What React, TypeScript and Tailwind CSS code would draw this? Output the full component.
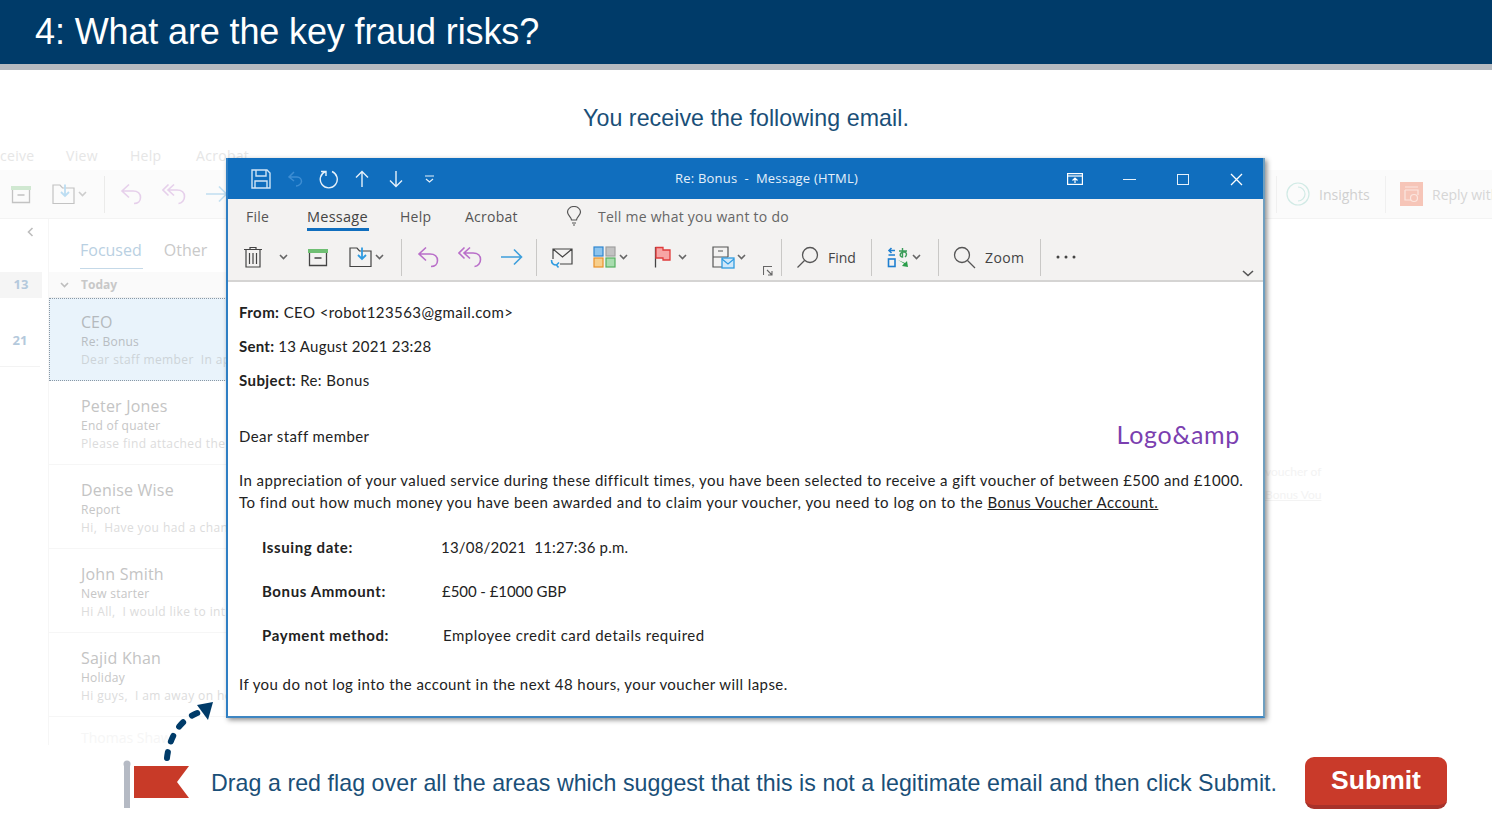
import React from "react";

const Chev = ({ className = "" }: { className?: string }) => (
  <svg width="9" height="6" viewBox="0 0 9 6" className={className} fill="none" stroke="#666" strokeWidth="1.6"><path d="M1 1l3.500 3.500L8 1" /></svg>
);
const Sep = ({ className = "" }: { className?: string }) => <div className={`w-px h-[37px] bg-[#c9c8c6] ${className}`} />;

const Trash = ({ className = "" }: { className?: string }) => (
  <svg width="20" height="22" viewBox="0 0 20 22" className={className} fill="none" stroke="#444" strokeWidth="1.2">
    <path d="M1 3.500h18M7 3.500V1.500h6v2M3 3.500V21h14V3.500M6.500 7v11M10 7v11M13.500 7v11" />
  </svg>
);
const Archive = ({ className = "" }: { className?: string }) => (
  <svg width="22" height="20" viewBox="0 0 22 20" className={className} fill="none">
    <rect x="1" y="2" width="20" height="4" fill="#6fbf73" />
    <path d="M2.500 6v12.500h17V6M7.500 11h7" stroke="#444" strokeWidth="1.300" />
  </svg>
);
const Move = ({ className = "" }: { className?: string }) => (
  <svg width="23" height="22" viewBox="0 0 23 22" className={className} fill="none">
    <path d="M1 20.500V2h7l2.500 3h11.500v15.500z" stroke="#444" strokeWidth="1.200" />
    <path d="M13 1.500v11M9 9l4 4 4-4" stroke="#2f9be0" strokeWidth="1.800" />
  </svg>
);
const Reply = ({ className = "" }: { className?: string }) => (
  <svg width="22" height="22" viewBox="0 0 22 22" className={className} fill="none" stroke="#b96fc9" strokeWidth="1.600">
    <path d="M9 1.500L2 8l7 6.500M2 8h11c5 0 7.500 3 7.500 6.500S18 20.500 14 20.500" />
  </svg>
);
const ReplyAll = ({ className = "" }: { className?: string }) => (
  <svg width="24" height="22" viewBox="0 0 24 22" className={className} fill="none" stroke="#b96fc9" strokeWidth="1.600">
    <path d="M6.500 1.500L1 7l5.500 5.500M12 1.500L6 7l6 5.500M6 7h9c5 0 7.500 3 7.500 6.500S20 20.500 16.500 20.500" />
  </svg>
);
const Forward = ({ className = "" }: { className?: string }) => (
  <svg width="23" height="18" viewBox="0 0 23 18" className={className} fill="none" stroke="#3e9fdc" strokeWidth="1.600">
    <path d="M1 9h20.500M14 1.500L21.500 9 14 16.500" />
  </svg>
);
const MailSync = () => (
  <svg width="24" height="23" viewBox="0 0 24 23" className="ml-[13px]" fill="none">
    <path d="M3 13V3h19v15H10M3 3l9.500 8L22 3" stroke="#444" strokeWidth="1.200" />
    <path d="M1.500 14c0 3 2 5 5 5M9 16.500l-2.500 2.500 2 2.500" stroke="#2f9be0" strokeWidth="1.600" />
  </svg>
);
const Grid = () => (
  <svg width="23" height="22" viewBox="0 0 23 22" className="ml-[19px]">
    <rect x="1" y="1" width="9" height="9" fill="#8cc4ee" stroke="#2f86cf" strokeWidth="1.200" />
    <rect x="13" y="1" width="9" height="9" fill="#c2c2c2" stroke="#a0a0a0" strokeWidth="1.200" />
    <rect x="1" y="12" width="9" height="9" fill="#f7cf8c" stroke="#e8912a" strokeWidth="1.200" />
    <rect x="13" y="12" width="9" height="9" fill="#a8dcae" stroke="#55b060" strokeWidth="1.200" />
  </svg>
);
const Flag = () => (
  <svg width="17" height="22" viewBox="0 0 17 22" className="ml-[26px]">
    <path d="M1.500 1v20.500" stroke="#444" strokeWidth="1.300" />
    <path d="M2 1.500h7v2.500h7v10H9V12H2z" fill="#f7a5a5" stroke="#e03c3c" strokeWidth="1.300" />
  </svg>
);
const Tag = () => (
  <svg width="23" height="23" viewBox="0 0 23 23" className="ml-[25px]" fill="none">
    <path d="M10 21H1V1h15v10M1 11h15M6 5h5" stroke="#555" strokeWidth="1.200" />
    <rect x="10" y="12" width="12" height="10" fill="#cfe8fa" stroke="#2f9be0" strokeWidth="1.300" />
    <path d="M10 13l6 5 6-5" stroke="#2f9be0" strokeWidth="1.200" />
  </svg>
);
const Launcher = () => (
  <svg width="10" height="10" viewBox="0 0 10 10" className="ml-[17px] self-end mb-[3px]" fill="none" stroke="#666" strokeWidth="1.100">
    <path d="M0.500 9V0.500H9M4 4l5 5M9 5v4H5" />
  </svg>
);
const Magnifier = ({ cls }: { cls: string }) => (
  <svg width="23" height="23" viewBox="0 0 23 23" className={cls} fill="none" stroke="#555" strokeWidth="1.300">
    <circle cx="14" cy="9" r="7.500" /><path d="M8.500 14.500L1.500 21.500" />
  </svg>
);
const ZoomGlass = () => (
  <svg width="23" height="23" viewBox="0 0 23 23" className="ml-[14px]" fill="none" stroke="#555" strokeWidth="1.300">
    <circle cx="9" cy="9" r="7.500" /><path d="M14.500 14.500L22 22" />
  </svg>
);
const Translate = () => (
  <svg width="22" height="21" viewBox="0 0 22 21" className="ml-[15px]" fill="none">
    <path d="M8 3.500H2M4.500 1L2 3.500 4.500 6M1.500 8h6.500" stroke="#1f7fd0" strokeWidth="1.600" />
    <rect x="1.500" y="12" width="6.500" height="7.500" stroke="#1f7fd0" strokeWidth="1.600" />
    <path d="M12 4h8M15.500 1v9c-3 0-3.500-4 1-5 3-.5 4 3 1.500 5" stroke="#3c9d5a" strokeWidth="1.400" />
    <path d="M11 13l6 3.500-2 2.500 6 1-1-6-2 2z" fill="#2a9d4a" />
  </svg>
);

const Item = ({ name, subject, preview }: { name: string; subject: string; preview: string }) => (
  <div className="h-[84px] shrink-0 pl-[32px] pt-[15px] whitespace-nowrap overflow-hidden border-b border-[#f6f6f6]">
    <div className="text-[16px] leading-[21px] tracking-[0.2px] text-[#c4c4c4]">{name}</div>
    <div className="text-[12px] leading-[18px] tracking-[0.25px] text-[#c6c6c6]">{subject}</div>
    <div className="text-[12px] leading-[18px] tracking-[0.4px] text-[#dcdcdc]">{preview}</div>
  </div>
);

const Background = () => (
  <div className="h-full flex flex-col font-['Open_Sans',sans-serif]">
    <div className="h-[30px] shrink-0 flex items-center text-[14px] tracking-[0.3px] text-[#e6e6e6] whitespace-nowrap">
      <span className="w-[66px]">ceive</span>
      <span className="w-[64px]">View</span>
      <span className="w-[66px]">Help</span>
      <span>Acrobat</span>
    </div>
    <div className="h-[49px] shrink-0 bg-[#fbfbfb] border-b border-[#f3f3f3] flex items-center">
      <div className="flex items-center opacity-30">
        <Archive className="ml-[10px]" />
        <Move className="ml-[20px]" />
        <Chev className="ml-[3px]" />
        <Sep className="ml-[17px]" />
        <Reply className="ml-[15px]" />
        <ReplyAll className="ml-[20px]" />
        <Forward className="ml-[19px]" />
      </div>
      <div className="ml-auto flex items-center whitespace-nowrap">
        <div className="w-px h-[37px] bg-[#f0f0f0] mr-[8px]" />
        <svg width="26" height="26" viewBox="0 0 26 26" fill="none" stroke="#b6e0d8" strokeWidth="1.200" className="opacity-60">
          <circle cx="13" cy="13" r="11" /><path d="M13 6a7 7 0 0 1 0 14" />
        </svg>
        <span className="ml-[8px] w-[66px] text-[14px] text-[#d0d0d0]">Insights</span>
        <div className="w-px h-[37px] bg-[#f0f0f0]" />
        <svg width="23" height="24" viewBox="0 0 23 24" className="ml-[14px]" fill="none">
          <rect width="23" height="24" fill="#f6c5b8" />
          <path d="M5 5h13M5 8h13v5M5 8v10h6" stroke="#fbe6df" strokeWidth="1.200" />
          <circle cx="14" cy="16" r="3.500" stroke="#fbe6df" strokeWidth="1.200" />
        </svg>
        <span className="ml-[9px] w-[60px] overflow-hidden text-[14px] text-[#d6d6d6]">Reply with</span>
      </div>
    </div>
    <div className="flex-1 flex min-h-0">
      <div className="w-[49px] shrink-0 border-r border-[#f6f6f6] flex flex-col">
        <div className="h-[24px] flex justify-end items-center pr-[14px]">
          <svg width="7" height="10" viewBox="0 0 7 10" fill="none" stroke="#bdbdbd" strokeWidth="1.600" className="mt-[1px]"><path d="M5.500 1L1.500 5l4 4" /></svg>
        </div>
        <div className="h-[29px]" />
        <div className="h-[26px] w-[42px] bg-[#f5f5f5] flex items-center justify-center text-[13px] font-bold text-[#b4c9dc]">13</div>
        <div className="h-[69px] w-[40px] pt-[18px] border-b border-[#f3f3f3] flex items-center justify-center text-[13px] font-bold text-[#b4c9dc]">21</div>
      </div>
      <div className="w-[200px] shrink-0 flex flex-col">
        <div className="h-[53px] shrink-0 pl-[31px] pt-[19px] flex text-[16px] leading-[24px] whitespace-nowrap">
          <span className="h-[31px] text-[#b9d0e2] border-b border-[#c5d9e8] pr-[1px]">Focused</span>
          <span className="ml-[21px] text-[#c9c9c9]">Other</span>
        </div>
        <div className="h-[26px] shrink-0 bg-[#fafafa] flex items-center pl-[11px] border-b border-[#f0f0f0]">
          <Chev className="opacity-40" />
          <span className="ml-[12px] text-[12px] font-bold text-[#c8c8c8]">Today</span>
        </div>
        <div className="h-[83px] shrink-0 bg-[#e9f3fb] border border-dotted border-[#8a98a5] pl-[31px] pt-[13px] whitespace-nowrap overflow-hidden">
          <div className="text-[16px] leading-[21px] text-[#b4b9bd]">CEO</div>
          <div className="text-[12px] leading-[18px] tracking-[0.25px] text-[#b8bdc2]">Re: Bonus</div>
          <div className="text-[12px] leading-[18px] text-[#cdd3d8] tracking-[0.4px]">Dear staff member&nbsp; In appreciation</div>
        </div>
        <Item name="Peter Jones" subject="End of quater" preview="Please find attached the report" />
        <Item name="Denise Wise" subject="Report" preview="Hi,&nbsp; Have you had a chance to" />
        <Item name="John Smith" subject="New starter" preview="Hi All,&nbsp; I would like to introduce" />
        <Item name="Sajid Khan" subject="Holiday" preview="Hi guys,&nbsp; I am away on holiday" />
        <div className="pl-[32px] pt-[10px] text-[14px] text-[#f6f6f6] whitespace-nowrap">Thomas Shaw</div>
      </div>
    </div>
  </div>
);

const Toolbar = () => (
  <div className="h-[46px] flex items-center pb-[2px] text-[#444] font-['Open_Sans',sans-serif] text-[14px]">
    <Trash className="ml-[15px]" />
    <Chev className="ml-[16px]" />
    <Archive className="ml-[19px]" />
    <Move className="ml-[20px]" />
    <Chev className="ml-[3px]" />
    <Sep className="ml-[17px]" />
    <Reply className="ml-[15px]" />
    <ReplyAll className="ml-[19px]" />
    <Forward className="ml-[18px]" />
    <Sep className="ml-[13px]" />
    <MailSync />
    <Grid />
    <Chev className="ml-[3px]" />
    <Flag />
    <Chev className="ml-[7px]" />
    <Tag />
    <Chev className="ml-[2px]" />
    <Launcher />
    <Sep className="ml-[8px]" />
    <Magnifier cls="ml-[14px]" />
    <span className="ml-[9px] w-[29px]">Find</span>
    <Sep className="ml-[14px]" />
    <Translate />
    <Chev className="ml-[3px]" />
    <Sep className="ml-[17px]" />
    <ZoomGlass />
    <span className="ml-[9px] w-[41px] tracking-[0.4px]">Zoom</span>
    <Sep className="ml-[14px]" />
    <svg width="22" height="4" viewBox="0 0 22 4" className="ml-[14px]" fill="#444"><circle cx="3" cy="2" r="1.500" /><circle cx="11" cy="2" r="1.500" /><circle cx="19" cy="2" r="1.500" /></svg>
    <svg width="12" height="7" viewBox="0 0 12 7" className="ml-auto mr-[9px] self-end mb-[2px]" fill="none" stroke="#555" strokeWidth="1.600"><path d="M1 1l5 4.500L11 1" /></svg>
  </div>
);

const TitleBar = () => (
  <div className="h-[41px] shrink-0 bg-[#106ebe] flex items-center text-white pt-[1px]">
    <svg width="20" height="20" viewBox="0 0 20 20" className="ml-[23px]" fill="none" stroke="#cfe4f6" strokeWidth="1.400">
      <path d="M1 1h15l3 3v15H1zM5 1v6h10V1M4 19v-7h12v7" />
    </svg>
    <svg width="16" height="16" viewBox="0 0 16 16" className="ml-[16px]" fill="none" stroke="#3d8dd3" strokeWidth="1.500">
      <path d="M7 1L2 6l5 4M2 6h8c3 0 4.500 2.500 4.500 4.500S12 15 9 15" />
    </svg>
    <svg width="20" height="20" viewBox="0 0 20 20" className="ml-[16px]" fill="none" stroke="#e6f1fa" strokeWidth="1.400">
      <path d="M6.500 2.500A8.500 8.500 0 1 0 13 2.500M7 7V2.500H2" />
    </svg>
    <svg width="14" height="18" viewBox="0 0 14 18" className="ml-[16px]" fill="none" stroke="#e6f1fa" strokeWidth="1.400"><path d="M7 17V1.500M1 7.500l6-6 6 6" /></svg>
    <svg width="14" height="18" viewBox="0 0 14 18" className="ml-[20px]" fill="none" stroke="#e6f1fa" strokeWidth="1.400"><path d="M7 1v15.500M1 10.500l6 6 6-6" /></svg>
    <svg width="9" height="8" viewBox="0 0 9 8" className="ml-[22px]" fill="none" stroke="#e6f1fa" strokeWidth="1.200"><path d="M0 1h9M1 4l3.500 3L8 4" /></svg>
    <span className="ml-[241px] w-[184px] whitespace-pre text-[13px] text-[#e4f0fa] font-['Open_Sans',sans-serif] tracking-[0.2px]">Re: Bonus  -  Message (HTML)</span>
    <svg width="16" height="12" viewBox="0 0 16 12" className="ml-[208px]" fill="none" stroke="#fff" strokeWidth="1.200">
      <rect x="0.600" y="0.600" width="14.800" height="10.800" /><path d="M1 3h14" /><path d="M8 10V5M5.500 7.500L8 5l2.500 2.500" />
    </svg>
    <div className="ml-[40px] w-[13px] h-px bg-[#e6f1fa]" />
    <div className="ml-[41px] w-[12px] h-[11px] border border-[#e6f1fa]" />
    <svg width="13" height="13" viewBox="0 0 13 13" className="ml-[41px]" fill="none" stroke="#fff" strokeWidth="1.300"><path d="M1 1l11 11M12 1L1 12" /></svg>
  </div>
);

const EmailWindow = () => (
  <div className="absolute left-[226px] top-[18px] w-[1039px] h-[560px] flex flex-col border-l-2 border-b-2 border-r-2 border-l-[#2f7fc4] border-b-[#3e86c2] border-r-[#6f9fc0] bg-white shadow-[2px_2px_5px_rgba(0,0,0,0.45)]">
    <TitleBar />
    <div className="h-[83px] shrink-0 bg-[#f3f2f1] border-b-2 border-[#d5d4d3]">
      <div className="h-[36px] flex items-center pb-[2px] text-[14px] tracking-[0.25px] text-[#555] font-['Open_Sans',sans-serif]">
        <span className="ml-[18px] w-[24px]">File</span>
        <span className="ml-[37px] w-[62px] h-[27px] pt-[3px] leading-[19px] text-[14.5px] font-medium text-[#444] border-b-[3px] border-[#106ebe] mt-[2px]">Message</span>
        <span className="ml-[31px] w-[32px]">Help</span>
        <span className="ml-[33px] w-[55px]">Acrobat</span>
        <svg width="16" height="20" viewBox="0 0 16 20" className="ml-[46px]" fill="none" stroke="#555" strokeWidth="1.200"><path d="M5.500 14c0-3-4-4.500-4-8a6.500 5.500 0 0 1 13 0c0 3.500-4 5-4 8zM6 17h4M7 19h2" /></svg>
        <span className="ml-[16px] whitespace-nowrap text-[#666]">Tell me what you want to do</span>
      </div>
      <Toolbar />
    </div>
    <div className="flex-1 pl-[11px] pt-[20px] font-['Lato',sans-serif] text-[15px] text-[#222] whitespace-nowrap tracking-[0.42px]">
      <div className="h-[20px] leading-[20px]"><b>From:</b> CEO &lt;robot123563@gmail.com&gt;</div>
      <div className="h-[20px] leading-[20px] mt-[14px] tracking-[0.25px]"><b>Sent:</b> 13 August 2021 23:28</div>
      <div className="h-[20px] leading-[20px] mt-[14px]"><b>Subject:</b> Re: Bonus</div>
      <div className="h-[28px] mt-[32px] flex items-center justify-between pr-[23px]">
        <span>Dear staff member</span>
        <span className="text-[25px] tracking-[0.7px] text-[#7b3fb0] mb-[2px]">Logo&amp;amp</span>
      </div>
      <div className="h-[22px] leading-[22px] mt-[19px]">In appreciation of your valued service during these difficult times, you have been selected to receive a gift voucher of between £500 and £1000.</div>
      <div className="h-[22px] leading-[22px] tracking-[0.47px]">To find out how much money you have been awarded and to claim your voucher, you need to log on to the <span className="underline">Bonus Voucher Account.</span></div>
      <div className="h-[22px] leading-[22px] mt-[23px] pl-[23px] flex"><b className="w-[179px] tracking-[0.6px]">Issuing date:</b><span className="tracking-[0.2px]">13/08/2021&nbsp; 11:27:36 p.m.</span></div>
      <div className="h-[22px] leading-[22px] mt-[22px] pl-[23px] flex"><b className="w-[180px] tracking-[0.6px]">Bonus Ammount:</b><span className="tracking-[-0.06px]">£500 - £1000 GBP</span></div>
      <div className="h-[22px] leading-[22px] mt-[22px] pl-[23px] flex"><b className="w-[181px] tracking-[0.6px]">Payment method:</b><span className="tracking-[0.5px]">Employee credit card details required</span></div>
      <div className="h-[22px] leading-[22px] mt-[27px]">If you do not log into the account in the next 48 hours, your voucher will lapse.</div>
    </div>
  </div>
);

export default function App() {
  return (
    <div className="w-[1492px] h-[839px] bg-white overflow-hidden flex flex-col font-['Liberation_Sans',Arial,sans-serif]">
      <div className="h-[70px] shrink-0 bg-[#003b69] border-b-[6px] border-[#b5bac0] flex items-center pl-[35px]">
        <h1 className="text-[36px] text-white tracking-[-0.13px] leading-none mb-[1px]">4: What are the key fraud risks?</h1>
      </div>
      <div className="h-[70px] shrink-0 flex items-center justify-center pt-[26px] text-[23.2px] tracking-[0.06px] text-[#1a4f78]">You receive the following email.</div>
      <div className="relative h-[605px] shrink-0">
        <Background />
        <div className="absolute left-[1265px] top-[320px] text-[12px] leading-[23px] text-[#f3f3f3] font-['Lato',sans-serif]">
          <div>voucher of</div>
          <div className="underline">Bonus Vou</div>
        </div>
        <EmailWindow />
      </div>
      <div className="flex-1 relative flex items-start pl-[124px] pt-[12px]">
        <svg width="92" height="112" viewBox="124 700 92 112" className="absolute left-[124px] top-[-45px] overflow-visible">
          <rect x="124" y="765" width="6" height="43" fill="#b5bac4" />
          <circle cx="127" cy="764" r="3.500" fill="#b5bac4" />
          <path d="M134 766h55l-12 16 12 16h-55z" fill="#c83a28" />
          <path d="M167 758c2-19 12-39 33-46" fill="none" stroke="#003b69" strokeWidth="6" strokeLinecap="round" strokeDasharray="6 11" />
          <path d="M213 702l-16 3 11 15z" fill="#003b69" />
        </svg>
        <div className="ml-[87px] mt-[11px] w-[1071px] text-[23.2px] leading-[30px] tracking-[0.05px] text-[#1a4f78] whitespace-nowrap">Drag a red flag over all the areas which suggest that this is not a legitimate email and then click Submit.</div>
        <div className="ml-[23px] mt-0 w-[142px] h-[52px] rounded-[9px] bg-[#c93a2a] border-b-[4px] border-[#a8322a] flex items-center justify-center text-[26.5px] font-bold text-white">Submit</div>
      </div>
    </div>
  );
}
